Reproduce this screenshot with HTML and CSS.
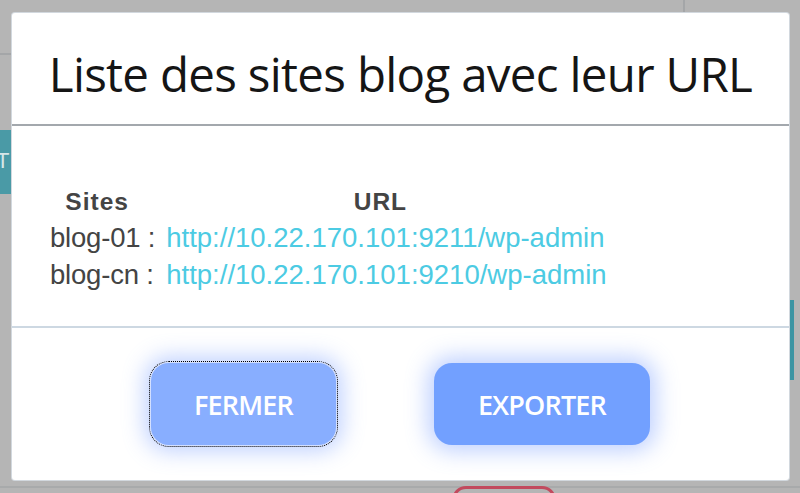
FILE: index.html
```html
<!DOCTYPE html>
<html lang="fr">
<head>
<meta charset="utf-8">
<link rel="stylesheet" href="styles.css">
</head>
<body>
<div class="backdrop">
  <div class="bg-line-h"></div>
  <div class="bg-line-v"></div>
  <div class="bg-teal"><span>TI</span></div>
  <div class="bg-teal-right"></div>
  <div class="bg-bottom-bar"></div>
  <div class="bg-red"></div>
  <div class="modal">
    <div class="modal-header">
      <h1 class="title">Liste des sites blog avec leur URL</h1>
    </div>
    <div class="modal-body">
      <table class="sites">
        <thead>
          <tr><th class="col-site">Sites</th><th class="col-url">URL</th></tr>
        </thead>
        <tbody>
          <tr><td class="site">blog-01 :</td><td><a class="link" href="#">http://10.22.170.101:9211/wp-admin</a></td></tr>
          <tr><td class="site">blog-cn :</td><td><a class="link" href="#">http://10.22.170.101:9210/wp-admin</a></td></tr>
        </tbody>
      </table>
    </div>
    <div class="modal-footer">
      <button class="btn btn-close">FERMER</button>
      <button class="btn btn-export">EXPORTER</button>
    </div>
  </div>
</div>
</body>
</html>
```
FILE: styles.css
```css
* { box-sizing: border-box; }
html, body { margin: 0; padding: 0; }
body { width: 800px; height: 493px; overflow: hidden; background: #b5b5b5; font-family: "Liberation Sans", Arial, sans-serif; }
.backdrop { position: relative; width: 800px; height: 493px; background: #b5b5b5; }
.bg-line-h { position: absolute; left: 0; top: 53px; width: 12px; height: 2px; background: #a4a6a8; }
.bg-line-v { position: absolute; left: 683px; top: 0; width: 2px; height: 13px; background: #a4a6a8; }
.bg-teal { position: absolute; left: 0; top: 130px; width: 12px; height: 64px; background: #4a9aa6; }
.bg-teal span { position: absolute; left: -4px; top: 18px; color: #d8e6e8; font-size: 22px; line-height: 26px; }
.bg-teal-right { position: absolute; left: 790px; top: 300px; width: 4px; height: 80px; background: #3d95a3; }
.bg-bottom-bar { position: absolute; left: 0; top: 486px; width: 800px; height: 2px; background: #a8aaab; }
.bg-red { position: absolute; left: 452px; top: 486px; width: 104px; height: 30px; border: 3px solid #c24a5e; border-radius: 14px; }
.modal { position: absolute; left: 12px; top: 13px; width: 777px; height: 467px; background: #fff; border-radius: 3px; box-shadow: 0 0 0 1px #d2d8de; display: flex; flex-direction: column; }
.modal-header { height: 113px; border-bottom: 2px solid #a3a8ad; display: flex; align-items: center; justify-content: center; padding-top: 10px; }
.title { margin: 0; font-family: "Open Sans", sans-serif; font-weight: 500; font-size: 47.5px; color: #151515; letter-spacing: -0.7px; white-space: nowrap; }
.modal-body { height: 202px; border-bottom: 2px solid #cdd8e2; padding: 59px 0 0 38px; }
.sites { border-collapse: collapse; font-size: 27.5px; color: #444; }
.sites th { font-weight: 700; font-size: 24.5px; letter-spacing: 1px; padding: 0; height: 34px; color: #444; }
.sites td { padding: 0; height: 37px; }
.col-site { text-align: center; padding-right: 22px !important; }
.col-url { text-align: center; padding-right: 12px !important; }
.site { white-space: nowrap; padding-right: 11px !important; letter-spacing: -0.2px; }
.link { color: #4ccbe3; text-decoration: none; letter-spacing: 0; }
.modal-footer { flex: 1; display: flex; justify-content: center; align-items: flex-start; padding-top: 35px; gap: 98px; }
.btn { border: 0; border-radius: 18px; height: 82px; color: #fff; font-family: "Open Sans", sans-serif; font-size: 27px; font-weight: 600; letter-spacing: -0.8px; box-shadow: 0 0 22px 6px rgba(110, 150, 255, 0.45); }
.btn-close { width: 185px; background: #88aeff; outline: 1px dotted #000; outline-offset: 1px; }
.btn-export { width: 216px; background: #72a0ff; }
```
